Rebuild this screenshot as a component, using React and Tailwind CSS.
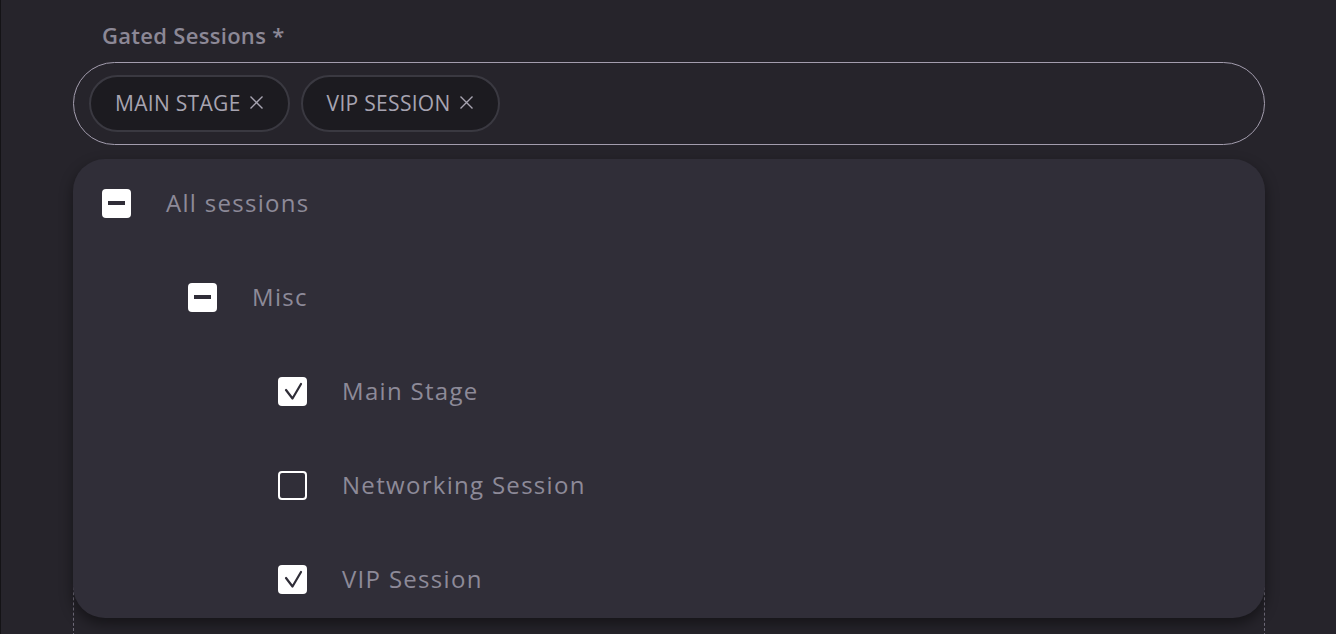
import React from 'react'

const font = { fontFamily: '"Open Sans", "Noto Sans", sans-serif' }

const Box = ({ state }) => {
  if (state === 'none') {
    return <span className="w-[29px] h-[29px] rounded-[4px] border-2 border-white shrink-0" />
  }
  return (
    <span className="w-[29px] h-[29px] rounded-[4px] bg-white shrink-0 flex items-center justify-center">
      {state === 'some' ? (
        <span className="block w-[17px] h-[4px] bg-[#2f2d37]" />
      ) : (
        <svg width="20" height="20" viewBox="0 0 20 20" fill="none">
          <path d="M3 9 L9.5 17.5 L18 3" stroke="#2f2d37" strokeWidth="2.2" strokeLinecap="round" strokeLinejoin="round" />
        </svg>
      )}
    </span>
  )
}

const Row = ({ state, label, indent }) => (
  <div className={`flex items-center h-[30px] ${indent}`}>
    <Box state={state} />
    <span className="ml-[35px] text-[24px] text-[#8d8a98] tracking-[1.3px]">{label}</span>
  </div>
)

const Chip = ({ label }) => (
  <div className="flex items-center h-[57px] px-[24px] rounded-full border-2 border-[#3a3941] bg-[#1c1b20]">
    <span className="text-[21px] text-[#a7a4b1] tracking-[0.3px]">{label}</span>
    <svg className="ml-[8px] -mt-[3px]" width="15" height="15" viewBox="0 0 15 15" fill="none">
      <path d="M1.5 1.5 L13.5 13.5 M13.5 1.5 L1.5 13.5" stroke="#a7a4b1" strokeWidth="1.4" />
    </svg>
  </div>
)

export default function App() {
  return (
    <div className="relative h-[634px] overflow-hidden bg-[#26242b] border-l border-[#141316]" style={font}>
      <div className="pl-[72px] pr-[71px] pt-[20px]">
        <label className="block h-[31px] pl-[29px] text-[22px] leading-[31px] font-semibold text-[#8c8896] tracking-[0.3px]">
          Gated Sessions *
        </label>
        <div className="mt-[11px] h-[83px] rounded-full border border-[#a39dae] flex items-center gap-[11px] px-[15px]">
          <Chip label="MAIN STAGE" />
          <Chip label="VIP SESSION" />
        </div>
        <div className="mt-[437px] h-[100px] border-x border-dashed border-[#6e6a78]" />
      </div>

      <div className="absolute left-[72px] top-[159px] w-[1192px] h-[459px] rounded-[32px] bg-[#302e38] shadow-[0_6px_14px_rgba(0,0,0,0.45)] pt-[29px] pl-[29px] flex flex-col gap-[64px]">
        <Row state="some" label="All sessions" indent="" />
        <Row state="some" label="Misc" indent="pl-[86px]" />
        <Row state="checked" label="Main Stage" indent="pl-[176px]" />
        <Row state="none" label="Networking Session" indent="pl-[176px]" />
        <Row state="checked" label="VIP Session" indent="pl-[176px]" />
      </div>
    </div>
  )
}
